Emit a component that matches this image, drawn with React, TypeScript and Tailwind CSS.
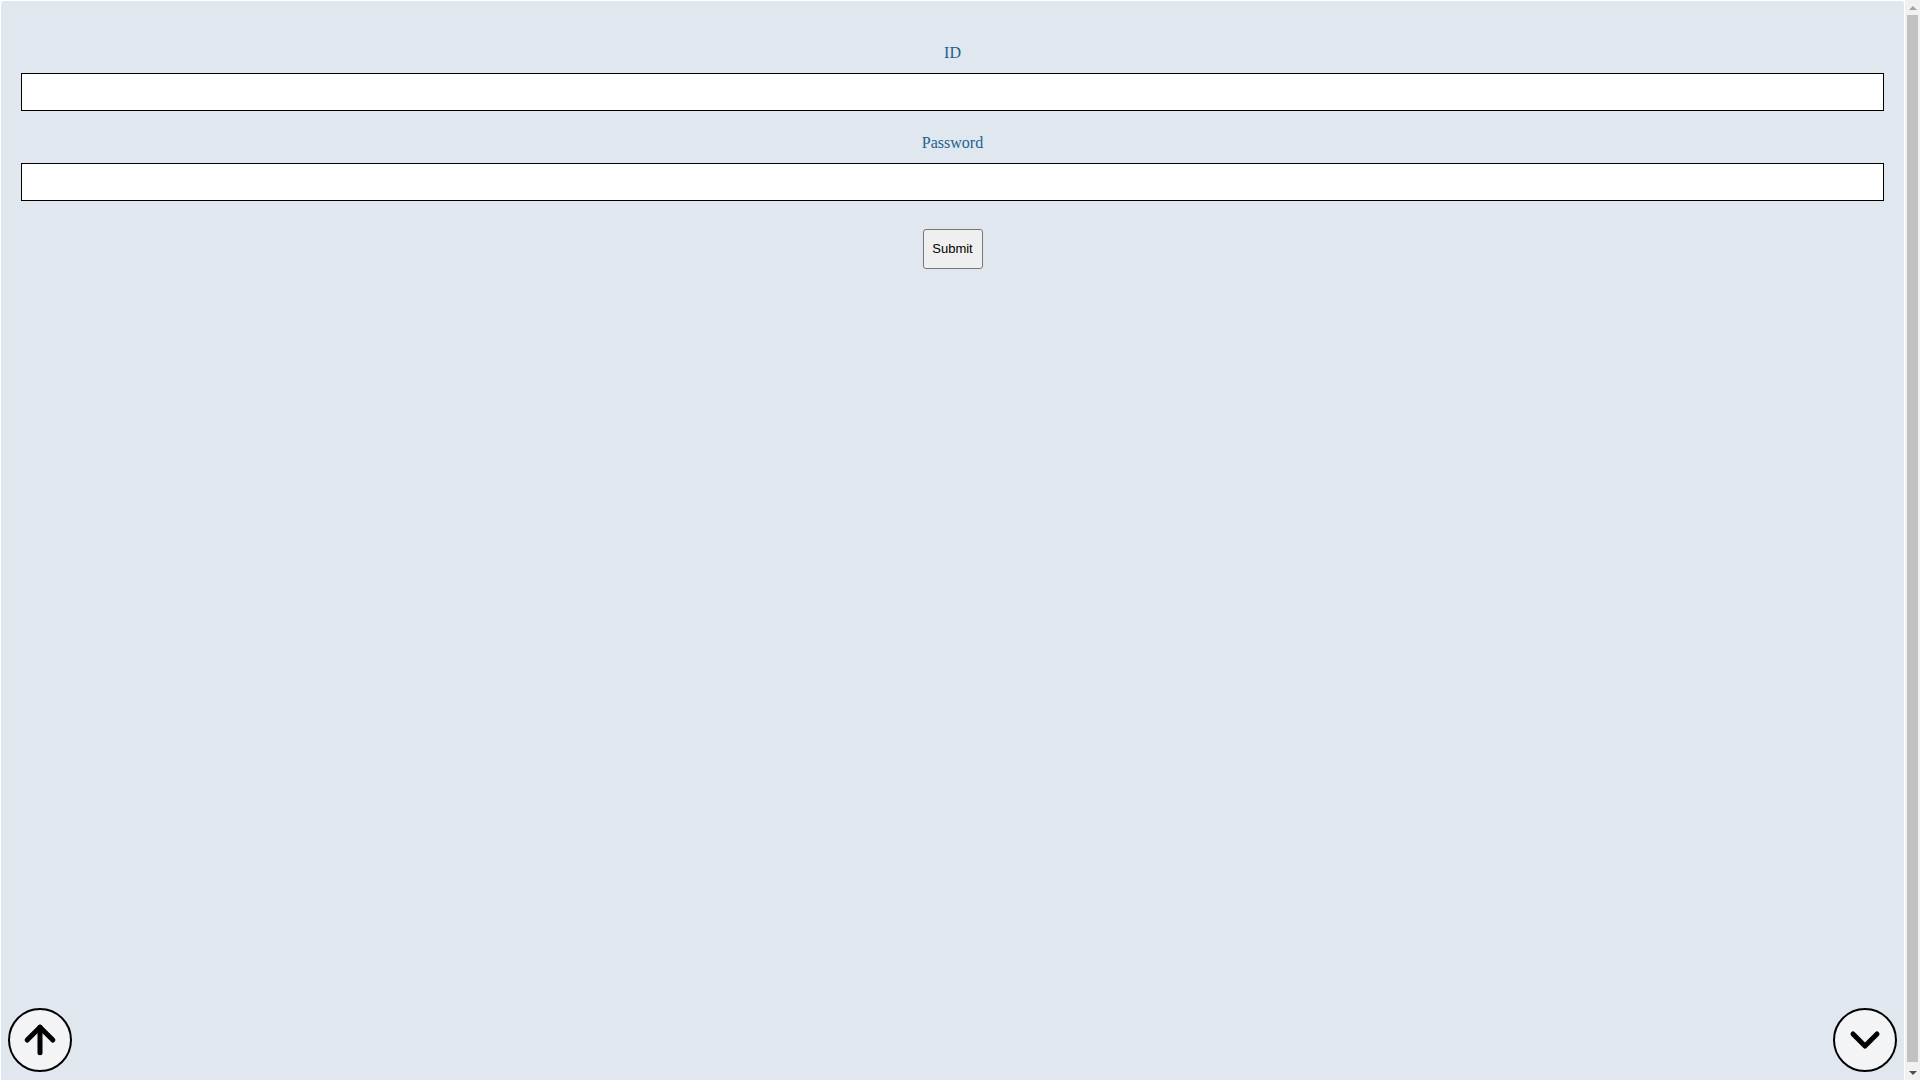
import { ArrowUp, ChevronDown } from "lucide-react";

function Field({ label, type }: { label: string; type: string }) {
  return (
    <div className="flex flex-col">
      <label className="block text-center text-base leading-6 text-[#1c6190] font-['Liberation_Serif',serif] mb-[8px]">
        {label}
      </label>
      <input
        type={type}
        className="h-[38px] w-full border border-black bg-white px-2 outline-none"
      />
    </div>
  );
}

// imitation of the browser's classic scrollbar shown in the screenshot
function Scrollbar() {
  return (
    <div className="flex w-[15px] shrink-0 flex-col items-center bg-[#f1f1f1]">
      <div className="flex h-[15px] w-full items-center justify-center">
        <div className="h-0 w-0 border-x-[4px] border-b-[4px] border-x-transparent border-b-[#a3a3a3]" />
      </div>
      <div className="w-[11px] flex-1 bg-[#c1c1c1] mb-[3px]" />
      <div className="flex h-[15px] w-full items-center justify-center">
        <div className="h-0 w-0 border-x-[4px] border-t-[4px] border-x-transparent border-t-[#505050]" />
      </div>
    </div>
  );
}

export default function App() {
  return (
    <div className="flex h-screen overflow-hidden bg-white">
      <div className="relative flex-1 p-px">
        <div className="h-[calc(100%+20px)] rounded-[3px] bg-[#e0e7ef] px-5 pt-[40px]">
          <form className="flex flex-col gap-[20px]" onSubmit={(e) => e.preventDefault()}>
            <Field label="ID" type="text" />
            <Field label="Password" type="password" />
            <div className="flex justify-center pt-[8px]">
              <button
                type="submit"
                className="h-[40px] w-[60px] rounded-[3px] border border-[#767676] bg-[#efefef] text-[13px] text-black font-['Liberation_Sans',Arial,sans-serif]"
              >
                Submit
              </button>
            </div>
          </form>
        </div>

        {/* scroll buttons */}
        <button className="absolute bottom-2 left-2 flex h-16 w-16 items-center justify-center rounded-full border-2 border-black bg-[#f3f4f6]">
          <ArrowUp className="h-11 w-11 text-black" strokeWidth={2.75} />
        </button>
        <button className="absolute bottom-2 right-2 flex h-16 w-16 items-center justify-center rounded-full border-2 border-black bg-[#f3f4f6]">
          <ChevronDown className="h-12 w-12 text-black" strokeWidth={2.5} />
        </button>
      </div>
      <Scrollbar />
    </div>
  );
}
